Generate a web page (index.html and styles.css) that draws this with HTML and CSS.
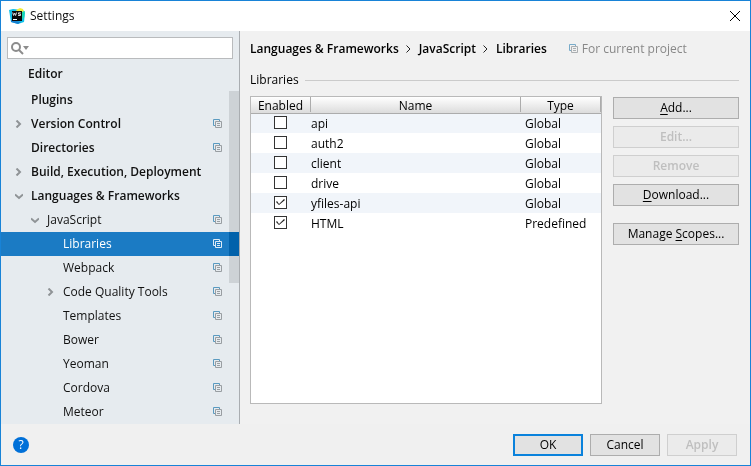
FILE: index.html
```html
<!DOCTYPE html>
<html lang="en">
<head>
<meta charset="utf-8">
<title>Settings</title>
<link rel="stylesheet" href="styles.css">
</head>
<body>
<svg class="defs" aria-hidden="true">
  <symbol id="copy" viewBox="0 0 9 10"><path class="back" d="M2 6.5H.5v-6h6V2"/><path class="front" d="M2.500 2.500h6v6h-6zM4 4.500h3M4 6.500h3"/></symbol>
  <symbol id="right" viewBox="0 0 8 8"><path d="M1.500 .5L5 4 1.500 7.500"/></symbol>
  <symbol id="down" viewBox="0 0 8 8"><path d="M0 2.500L4 6l4-3.500"/></symbol>
</svg>
<div class="window">
  <header class="titlebar">
    <svg class="logo" viewBox="0 0 16 16" aria-hidden="true">
      <path fill="#12c1e8" d="M0 2l4-1 10 1 2 3-1 9-6 2-7-2z"/>
      <path fill="#f4ee3c" d="M7 2l4-2 3 1 1 4-5 1z"/>
      <path fill="#18d6b4" d="M13 4l3-1-1 7-2 1z"/>
      <path fill="#167ed0" d="M2 12l5 1 5 1-3 2-7-2z"/>
      <path fill="#0a0a0a" d="M3 3h10v10H3z"/>
      <path fill="none" stroke="#ddd" stroke-width="1" d="M3.700 4.500l.9 3 1-2.500 1 2.500.9-3M11.800 4.800H9.500v1.300h2V7.500H9.100"/>
      <path fill="#fff" d="M4 11h4v1H4z"/>
    </svg>
    <h1>Settings</h1>
    <button class="close" aria-label="Close"><svg viewBox="0 0 10 10"><path d="M0 0l10 10M10 0L0 10"/></svg></button>
  </header>
  <div class="body">
    <aside class="sidebar">
      <label class="search">
        <svg viewBox="0 0 18 13" aria-hidden="true"><circle cx="5" cy="5" r="4"/><path class="handle" d="M8 8l4 4"/><path class="caret" d="M12 4h6l-3 4z"/></svg>
        <input type="text" aria-label="Search settings">
      </label>
      <nav class="viewport">
        <ul class="tree">
          <li class="top heading"><a href="#">Editor</a></li>
          <li class="top"><a href="#">Plugins</a></li>
          <li class="top"><svg class="arrow"><use href="#right"/></svg><a href="#">Version Control</a><svg class="copy"><use href="#copy"/></svg></li>
          <li class="top"><a href="#">Directories</a><svg class="copy"><use href="#copy"/></svg></li>
          <li class="top"><svg class="arrow"><use href="#right"/></svg><a href="#">Build, Execution, Deployment</a></li>
          <li class="top"><svg class="arrow"><use href="#down"/></svg><a href="#">Languages &amp; Frameworks</a></li>
          <li class="second"><svg class="arrow"><use href="#down"/></svg><a href="#">JavaScript</a><svg class="copy"><use href="#copy"/></svg></li>
          <li class="third selected"><a href="#" aria-current="page">Libraries</a><svg class="copy"><use href="#copy"/></svg></li>
          <li class="third"><a href="#">Webpack</a><svg class="copy"><use href="#copy"/></svg></li>
          <li class="third"><svg class="arrow"><use href="#right"/></svg><a href="#">Code Quality Tools</a><svg class="copy"><use href="#copy"/></svg></li>
          <li class="third"><a href="#">Templates</a><svg class="copy"><use href="#copy"/></svg></li>
          <li class="third"><a href="#">Bower</a><svg class="copy"><use href="#copy"/></svg></li>
          <li class="third"><a href="#">Yeoman</a><svg class="copy"><use href="#copy"/></svg></li>
          <li class="third"><a href="#">Cordova</a><svg class="copy"><use href="#copy"/></svg></li>
          <li class="third"><a href="#">Meteor</a><svg class="copy"><use href="#copy"/></svg></li>
        </ul>
        <div class="thumb"></div>
      </nav>
    </aside>
    <main class="content">
      <div class="crumbs">
        <b>Languages &amp; Frameworks</b><svg class="sep"><use href="#right"/></svg><b>JavaScript</b><svg class="sep"><use href="#right"/></svg><b>Libraries</b>
        <span class="scope"><svg class="copy"><use href="#copy"/></svg>For current project</span>
      </div>
      <h2 class="section">Libraries</h2>
      <div class="panel">
        <div class="table-box">
          <table>
            <thead><tr><th class="c-enabled"><span>Enabled</span></th><th><span>Name</span></th><th class="c-type"><span>Type</span></th></tr></thead>
            <tbody>
              <tr><td><input type="checkbox" aria-label="Enable api"></td><td>api</td><td>Global</td></tr>
              <tr><td><input type="checkbox" aria-label="Enable auth2"></td><td>auth2</td><td>Global</td></tr>
              <tr><td><input type="checkbox" aria-label="Enable client"></td><td>client</td><td>Global</td></tr>
              <tr><td><input type="checkbox" aria-label="Enable drive"></td><td>drive</td><td>Global</td></tr>
              <tr><td><input type="checkbox" aria-label="Enable yfiles-api" checked></td><td>yfiles-api</td><td>Global</td></tr>
              <tr><td><input type="checkbox" aria-label="Enable HTML" checked></td><td>HTML</td><td>Predefined</td></tr>
            </tbody>
          </table>
        </div>
        <div class="actions">
          <button class="btn"><u>A</u>dd...</button>
          <button class="btn" disabled>Edit...</button>
          <button class="btn" disabled>Remove</button>
          <button class="btn"><u>D</u>ownload...</button>
          <button class="btn apart">Manage <u>S</u>copes...</button>
        </div>
      </div>
    </main>
  </div>
  <footer class="footer">
    <button class="help" aria-label="Help">?</button>
    <button class="btn primary">OK</button>
    <button class="btn">Cancel</button>
    <button class="btn" disabled>Apply</button>
  </footer>
</div>
</body>
</html>
```
FILE: styles.css
```css
* { box-sizing: border-box; }
body {
  margin: 0;
  font: 12px/16px "Open Sans", "Noto Sans", sans-serif;
  color: #111;
}
h1, h2 { margin: 0; font-size: 12px; font-weight: 400; }
button, input { font: inherit; color: inherit; margin: 0; padding: 0; }
svg { display: block; flex: none; fill: none; }
.defs { position: absolute; width: 0; height: 0; }

.window {
  display: flex;
  flex-direction: column;
  min-height: 100vh;
  border: 1px solid #1883d7;
  background: #f1f1f1;
}
.titlebar {
  display: flex;
  align-items: center;
  gap: 5px;
  height: 30px;
  padding: 0 10px 0 8px;
  background: #fff;
}
.logo { width: 16px; height: 16px; }
.close { margin-left: auto; border: 0; background: none; }
.close svg { width: 10px; height: 10px; stroke: #000; }

.body { display: flex; flex: 1; }
.sidebar {
  display: flex;
  flex-direction: column;
  flex: 0 0 239px;
  border-right: 1px solid #a9adb1;
  background: #e6ebef;
}
.search {
  display: flex;
  align-items: center;
  gap: 4px;
  height: 22px;
  margin: 6px 6px 0;
  padding: 0 3px;
  border: 1px solid #b9bbbd;
  background: #fff;
}
.search svg { width: 18px; height: 13px; }
.search circle, .search .handle { stroke: #8c8c8c; stroke-width: 2; }
.search .caret { fill: #8c8c8c; }
.search input { flex: 1; min-width: 0; border: 0; outline: 0; background: none; }

.viewport { position: relative; flex: 1; padding-top: 4px; }
.tree { margin: 0; padding: 0; list-style: none; }
.tree li { display: flex; align-items: center; height: 24px; padding-right: 17px; }
.tree a { color: inherit; text-decoration: none; white-space: nowrap; }
.tree .top { padding-left: 30px; font-weight: 600; }
.tree .heading { height: 25px; padding-bottom: 3px; padding-left: 27px; }
.tree .second { padding-left: 46px; }
.tree .third { padding-left: 62px; }
.tree .selected { background: #1b7bc4; color: #fff; }
.arrow {
  width: 8px;
  height: 8px;
  margin: 0 8px 0 -16px;
  stroke: #8f9396;
  stroke-width: 2;
}
.copy { width: 9px; height: 10px; }
.tree .copy { margin-left: auto; }
.back { stroke: #5a9ac0; stroke-width: 1; }
.front { stroke: #999ea2; stroke-width: 1; }
.selected .copy { filter: brightness(0) invert(1); opacity: .85; }
/* The thumb darkens whatever row is under it. */
.thumb {
  position: absolute;
  top: 32px;
  right: 0;
  width: 10px;
  height: 192px;
  background: #191919;
  mix-blend-mode: difference;
}

.content {
  display: flex;
  flex-direction: column;
  flex: 1;
  min-width: 0;
  padding: 10px 11px 20px 10px;
}
.crumbs { display: flex; align-items: center; color: #000; white-space: nowrap; }
.crumbs b { font-weight: 600; }
.sep { width: 8px; height: 8px; margin: 0 6px; stroke: #222; stroke-width: 1; }
.scope { display: flex; align-items: center; gap: 4px; margin-left: 22px; color: #888; }
.scope .copy { opacity: .8; }
.section { display: flex; align-items: center; gap: 6px; margin-top: 15px; color: #000; }
.section::after { content: ""; flex: 1; height: 1px; background: #cbcbcb; }

.panel { display: flex; flex: 1; gap: 11px; margin-top: 8px; }
.table-box { flex: 1; border: 1px solid #b9b9b9; background: #fff; }
table { width: 100%; border-collapse: collapse; table-layout: fixed; color: #000; }
th {
  height: 16px;
  padding: 0;
  border-bottom: 1px solid #acacac;
  background: linear-gradient(#fff, #dcdcdc);
  font-weight: 400;
}
th span { display: block; height: 15px; line-height: 18px; border-right: 1px solid #acacac; }
.c-enabled { width: 60px; }
.c-type { width: 80px; }
tbody tr { height: 20px; }
tbody tr:nth-child(odd) { background: #f1f5fa; }
td { padding: 0 1px 1px 0; }
td + td { padding: 2px 0 0; }
td:last-child { padding-left: 4px; }
td input {
  display: block;
  width: 13px;
  height: 13px;
  margin: 0 auto;
  appearance: none;
  border: 1px solid #333;
  background: #fff;
}
td input:checked::before {
  content: "";
  display: block;
  width: 11px;
  height: 11px;
  background: #222;
  clip-path: polygon(1px 5px, 2px 4px, 4px 7px, 9px 2px, 10px 3px, 4px 8px);
}

.actions { display: flex; flex-direction: column; gap: 7px; flex: 0 0 126px; padding-top: 1px; }
.btn {
  height: 22px;
  border: 1px solid #adadad;
  background: #e2e2e2;
  color: #000;
}
.btn:disabled { border-color: #cfcfcf; background: #ebebeb; color: #bfbfbf; font-weight: 600; }
.apart { margin-top: 10px; }
.btn u { text-underline-offset: 2px; }

.footer {
  display: flex;
  align-items: center;
  gap: 7px;
  height: 41px;
  padding: 0 13px 0 12px;
  background: #f0f0f0;
}
.footer .btn { width: 70px; }
.footer .primary { border: 2px solid #0a82dc; }
.help {
  width: 16px;
  height: 16px;
  margin-right: auto;
  border: 0;
  border-radius: 50%;
  background: #0070d8;
  color: #fff;
  line-height: 16px;
  text-align: center;
}
```
